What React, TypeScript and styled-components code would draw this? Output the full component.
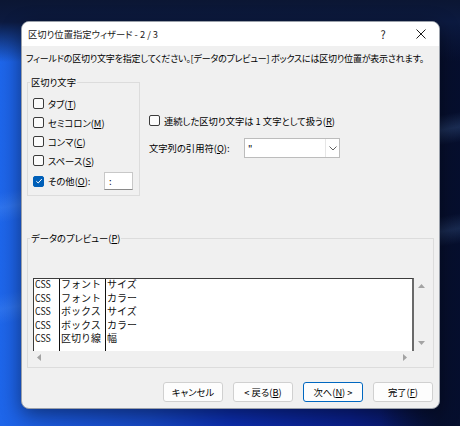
import React from 'react';
import styled, { createGlobalStyle } from 'styled-components';

const GlobalStyle = createGlobalStyle`
  html, body {
    margin: 0;
    padding: 0;
  }

  body {
    font-family: 'Noto Sans CJK JP', 'Noto Sans', sans-serif;
  }
`;

const Desktop = styled.div`
  width: 460px;
  height: 426px;
  box-sizing: border-box;
  padding: 21px 0 0 21px;
  overflow: hidden;
  background-color: #0a1a4a;
  background-image: linear-gradient(
      to bottom,
      #0b1633 0px,
      #0c1a40 22px,
      rgba(12, 26, 64, 0) 62px
    ),
    linear-gradient(
      170deg,
      rgba(120, 180, 255, 0) 38%,
      rgba(120, 180, 255, 0.18) 41%,
      rgba(120, 180, 255, 0) 44%,
      rgba(120, 180, 255, 0) 58%,
      rgba(120, 180, 255, 0.16) 61%,
      rgba(120, 180, 255, 0) 64%
    ),
    linear-gradient(
      to right,
      rgba(6, 14, 42, 0) 380px,
      rgba(6, 14, 42, 0.9) 440px
    ),
    linear-gradient(
      to right,
      #1e66ea 0px,
      #1a58dc 60px,
      #1648c6 150px,
      #0c2eb0 230px,
      #0a1f8a 350px,
      #081650 440px
    );
`;

const Window = styled.div`
  width: 419px;
  height: 388px;
  box-sizing: border-box;
  display: flex;
  flex-direction: column;
  background: #f0f0f0;
  border: 1px solid #9aa0aa;
  border-radius: 8px;
  overflow: hidden;
  box-shadow: 0 6px 20px rgba(0, 0, 0, 0.45);
  font-size: 9.3px;
  color: #000;
  font-feature-settings: 'palt';
`;

const TitleBar = styled.div`
  height: 24px;
  flex-shrink: 0;
  display: flex;
  align-items: center;
  background: #fff;
  padding-left: 6px;
`;

const Title = styled.div`
  flex: 1;
  line-height: 24px;
  color: #1a1a1a;
`;

const CaptionButton = styled.div<{ $w: number }>`
  width: ${p => p.$w}px;
  height: 24px;
  display: flex;
  align-items: center;
  justify-content: center;
  font-size: 11px;
  color: #1a1a1a;
`;

const Body = styled.div`
  flex: 1;
  display: flex;
  flex-direction: column;
  padding: 6px 6px 6px 5px;
`;

const Instruction = styled.div`
  line-height: 14px;
  white-space: nowrap;
  margin-left: -1px;
  font-size: 9px;
  letter-spacing: -0.2px;
`;

const TopSection = styled.div`
  display: flex;
  align-items: flex-start;
  margin-top: 9px;
`;

const Group = styled.fieldset<{ $w: number; $pt: number }>`
  margin: 0;
  width: ${p => p.$w}px;
  box-sizing: border-box;
  min-width: 0;
  padding: ${p => p.$pt}px 6px 4px 5px;
  border: 1px solid #dcdcdc;

  legend {
    margin-left: -3px;
    padding: 0 1px;
    line-height: 14px;
  }
`;

const CheckRow = styled.label<{ $h?: number }>`
  display: flex;
  align-items: center;
  gap: 4px;
  height: ${p => p.$h ?? 19}px;
  white-space: nowrap;
`;

const Box = styled.span<{ $checked?: boolean }>`
  width: 11px;
  height: 11px;
  box-sizing: border-box;
  flex-shrink: 0;
  border-radius: 2px;
  border: 1px solid ${p => (p.$checked ? '#005fb8' : '#3b3b3b')};
  background: ${p => (p.$checked ? '#005fb8' : '#fbfbfb')};
  display: flex;
  align-items: center;
  justify-content: center;
`;

const Key = styled.span`
  text-decoration: underline;
`;

const SmallInput = styled.div`
  margin-left: auto;
  width: 29px;
  height: 18px;
  box-sizing: border-box;
  border: 1px solid #c8c8c8;
  border-bottom-color: #8a8a8a;
  background: #fff;
  padding-left: 4px;
  line-height: 16px;
`;

const OptionsColumn = styled.div`
  margin: 36px 0 0 9px;
  display: flex;
  flex-direction: column;
  gap: 8px;
`;

const QuoteRow = styled.div`
  display: flex;
  align-items: center;
  height: 20px;
`;

const QuoteLabel = styled.span`
  width: 95px;
  white-space: nowrap;
`;

const Select = styled.div`
  width: 96px;
  height: 20px;
  box-sizing: border-box;
  display: flex;
  border: 1px solid #bcbcbc;
  background: #fff;
`;

const SelectValue = styled.div`
  flex: 1;
  padding-left: 3px;
  line-height: 18px;
`;

const SelectButton = styled.div`
  width: 13px;
  border-left: 1px solid #e6e6e6;
  display: flex;
  align-items: center;
  justify-content: center;
`;

const PreviewFrame = styled.div`
  display: grid;
  grid-template-columns: 381px 14px;
  grid-template-rows: 73px 12px;
`;

const PreviewList = styled.div`
  display: flex;
  box-sizing: border-box;
  background: #fff;
  border-top: 1px solid #3c3c3c;
  border-left: 1px solid #3c3c3c;
  border-right: 2px solid #6a6a6a;
  font-feature-settings: normal;
  font-size: 10px;
  color: #111;
`;

const PreviewColumn = styled.div<{ $w?: number }>`
  width: ${p => (p.$w ? `${p.$w}px` : 'auto')};
  flex: ${p => (p.$w ? 'none' : 1)};
  border-right: ${p => (p.$w ? '1px solid #111' : 'none')};
  padding-left: 1px;
`;

const Cell = styled.div<{ $ascii?: boolean }>`
  height: 13.5px;
  line-height: 10.5px;
  white-space: nowrap;
  transform: ${p => (p.$ascii ? 'scaleX(0.88)' : 'none')};
  transform-origin: left center;
`;

const VScroll = styled.div`
  display: flex;
  flex-direction: column;
  justify-content: space-between;
  align-items: center;
  padding: 6px 0 6px;
`;

const HScroll = styled.div`
  display: flex;
  justify-content: space-between;
  align-items: center;
  padding: 0 7px 0 4px;
`;

const ButtonRow = styled.div`
  margin-top: auto;
  display: flex;
  justify-content: flex-end;
  gap: 10px;
`;

const Button = styled.div<{ $primary?: boolean }>`
  width: 60px;
  height: 20px;
  box-sizing: border-box;
  display: flex;
  align-items: center;
  justify-content: center;
  border: 1px solid ${p => (p.$primary ? '#0067c0' : '#d0d0d0')};
  border-radius: 3px;
  background: #fdfdfd;
  white-space: pre;
`;

const Check = () => (
  <svg width="8" height="8" viewBox="0 0 8 8">
    <polyline
      points="1.3,4.2 3.2,6 6.8,2"
      fill="none"
      stroke="#fff"
      strokeWidth="1"
    />
  </svg>
);

const Arrow = ({ dir }: { dir: 'up' | 'down' | 'left' | 'right' }) => {
  const points = {
    up: '0,4 3.5,0 7,4',
    down: '0,0 3.5,4 7,0',
    left: '4,0 0,3.5 4,7',
    right: '0,0 4,3.5 0,7',
  }[dir];
  const vertical = dir === 'up' || dir === 'down';
  return (
    <svg
      width={vertical ? 7 : 4}
      height={vertical ? 4 : 7}
      viewBox={vertical ? '0 0 7 4' : '0 0 4 7'}
    >
      <polygon points={points} fill="#a3a3a3" />
    </svg>
  );
};

const delimiters = [
  { label: 'タブ', key: 'T' },
  { label: 'セミコロン', key: 'M' },
  { label: 'コンマ', key: 'C' },
  { label: 'スペース', key: 'S' },
];

const rows = [
  ['CSS', 'フォント', 'サイズ'],
  ['CSS', 'フォント', 'カラー'],
  ['CSS', 'ボックス', 'サイズ'],
  ['CSS', 'ボックス', 'カラー'],
  ['CSS', '区切り線', '幅'],
];

export default function App() {
  return (
    <>
      <GlobalStyle />
      <Desktop>
        <Window>
          <TitleBar>
            <Title>区切り位置指定ウィザード - 2 / 3</Title>
            <CaptionButton $w={40}>?</CaptionButton>
            <CaptionButton $w={36}>
              <svg width="10" height="10" viewBox="0 0 10 10">
                <path d="M0.5 0.5 L9.5 9.5 M9.5 0.5 L0.5 9.5" stroke="#1a1a1a" strokeWidth="1" />
              </svg>
            </CaptionButton>
          </TitleBar>
          <Body>
            <Instruction>
              フィールドの区切り文字を指定してください。[データのプレビュー] ボックスには区切り位置が表示されます。
            </Instruction>
            <TopSection>
              <Group $w={113} $pt={5}>
                <legend>区切り文字</legend>
                {delimiters.map(d => (
                  <CheckRow key={d.key}>
                    <Box />
                    <span>
                      {d.label}(<Key>{d.key}</Key>)
                    </span>
                  </CheckRow>
                ))}
                <CheckRow $h={20} style={{ marginTop: 1 }}>
                  <Box $checked>
                    <Check />
                  </Box>
                  <span>
                    その他(<Key>O</Key>):
                  </span>
                  <SmallInput>:</SmallInput>
                </CheckRow>
              </Group>
              <OptionsColumn>
                <CheckRow>
                  <Box />
                  <span>
                    連続した区切り文字は 1 文字として扱う(<Key>R</Key>)
                  </span>
                </CheckRow>
                <QuoteRow>
                  <QuoteLabel>
                    文字列の引用符(<Key>Q</Key>):
                  </QuoteLabel>
                  <Select>
                    <SelectValue>"</SelectValue>
                    <SelectButton>
                      <svg width="8" height="5" viewBox="0 0 8 5">
                        <polyline points="0.5,0.5 4,4 7.5,0.5" fill="none" stroke="#606060" strokeWidth="1" />
                      </svg>
                    </SelectButton>
                  </Select>
                </QuoteRow>
              </OptionsColumn>
            </TopSection>
            <Group $w={407} $pt={33} style={{ marginTop: 35 }}>
              <legend>
                データのプレビュー(<Key>P</Key>)
              </legend>
              <PreviewFrame>
                <PreviewList>
                  <PreviewColumn $w={24}>
                    {rows.map((r, i) => (
                      <Cell key={i} $ascii>
                        {r[0]}
                      </Cell>
                    ))}
                  </PreviewColumn>
                  <PreviewColumn $w={44}>
                    {rows.map((r, i) => (
                      <Cell key={i}>{r[1]}</Cell>
                    ))}
                  </PreviewColumn>
                  <PreviewColumn>
                    {rows.map((r, i) => (
                      <Cell key={i}>{r[2]}</Cell>
                    ))}
                  </PreviewColumn>
                </PreviewList>
                <VScroll>
                  <Arrow dir="up" />
                  <Arrow dir="down" />
                </VScroll>
                <HScroll>
                  <Arrow dir="left" />
                  <Arrow dir="right" />
                </HScroll>
              </PreviewFrame>
            </Group>
            <ButtonRow>
              <Button>キャンセル</Button>
              <Button>
                &lt; 戻る(<Key>B</Key>)
              </Button>
              <Button $primary>
                次へ(<Key>N</Key>) &gt;
              </Button>
              <Button>
                完了(<Key>F</Key>)
              </Button>
            </ButtonRow>
          </Body>
        </Window>
      </Desktop>
    </>
  );
}
